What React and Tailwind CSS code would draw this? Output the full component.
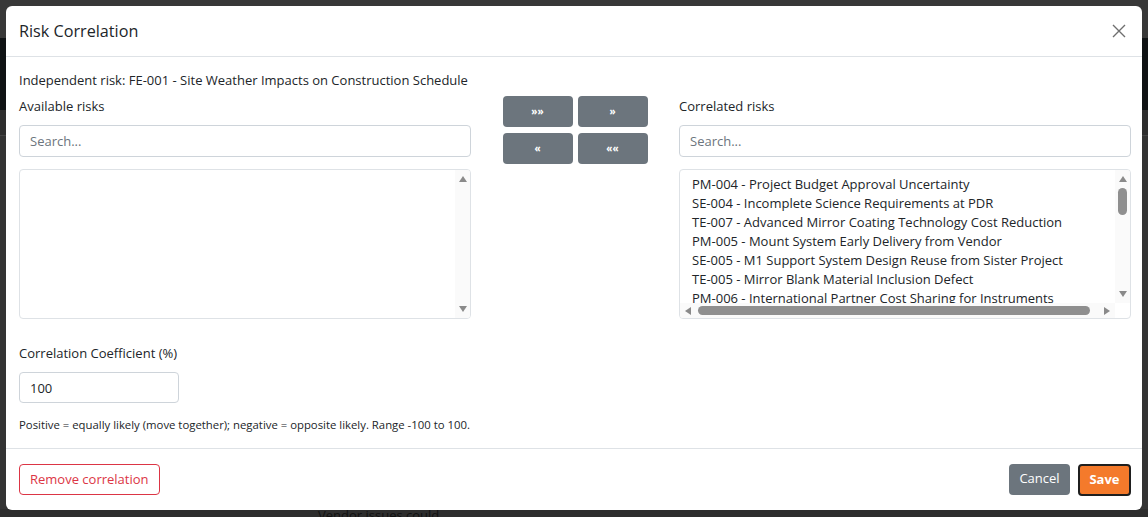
import React, { useState } from 'react';

const correlated = [
  'PM-004 - Project Budget Approval Uncertainty',
  'SE-004 - Incomplete Science Requirements at PDR',
  'TE-007 - Advanced Mirror Coating Technology Cost Reduction',
  'PM-005 - Mount System Early Delivery from Vendor',
  'SE-005 - M1 Support System Design Reuse from Sister Project',
  'TE-005 - Mirror Blank Material Inclusion Defect',
  'PM-006 - International Partner Cost Sharing for Instruments',
  'SE-006 - Enclosure Thermal Model Validation Gap',
];

const Tri = ({ dir }) => {
  const pts = {
    up: '0,6 4,0 8,6',
    down: '0,0 8,0 4,6',
    left: '6,0 6,8 0,4',
    right: '0,0 0,8 6,4',
  }[dir];
  const w = dir === 'up' || dir === 'down' ? 8 : 6;
  const h = dir === 'up' || dir === 'down' ? 6 : 8;
  return (
    <svg width={w} height={h} viewBox={`0 0 ${w} ${h}`}>
      <polygon points={pts} fill="#8a8a8a" />
    </svg>
  );
};

const ListBox = ({ items, horizontal }) => (
  <div className="relative h-[150px] border border-[#dee2e6] rounded-[4px] overflow-hidden bg-white">
    <div className="pl-3 pt-[5px] pr-5 text-[13px] leading-[19px] text-[#212529] whitespace-nowrap">
      {items.map((t) => (
        <div key={t}>{t}</div>
      ))}
    </div>
    {/* vertical scrollbar */}
    <div className={`absolute right-0 top-0 w-[15px] bg-[#fafafa] flex flex-col items-center justify-between py-[6px] ${horizontal ? 'bottom-[15px]' : 'bottom-0'}`}>
      <Tri dir="up" />
      {horizontal && <div className="absolute top-[18px] left-[3px] w-[9px] h-[27px] rounded-full bg-[#8f8f8f]" />}
      <Tri dir="down" />
    </div>
    {horizontal && (
      <div className="absolute left-0 right-[15px] bottom-0 h-[15px] bg-[#fafafa] flex items-center justify-between px-[5px]">
        <Tri dir="left" />
        <div className="flex-1 mx-[7px] h-[9px] rounded-full bg-[#8f8f8f] mr-[14px]" />
        <Tri dir="right" />
      </div>
    )}
  </div>
);

const SearchBox = () => (
  <input
    className="w-full h-[32px] border border-[#ced4da] rounded-[4px] px-[10px] text-[13px] text-[#212529] placeholder-[#6c757d] outline-none"
    placeholder="Search..."
  />
);

const MoveButton = ({ label }) => (
  <button className="w-[70px] h-[31px] rounded-[4px] bg-[#6c757d] text-white text-[10px] font-bold flex items-center justify-center">
    {label}
  </button>
);

export default function App() {
  const [coef, setCoef] = useState('100');

  return (
    <div
      className="relative w-[1148px] h-[517px] overflow-hidden bg-[#363636]"
      style={{ fontFamily: '"Open Sans", "Liberation Sans", sans-serif' }}
    >
      {/* dimmed page behind the dialog */}
      <div className="absolute inset-0 flex flex-col">
        <div className="h-[38px] bg-[#383838]" />
        <div className="h-[72px] bg-[#0f1214]" />
        <div className="h-[26px] bg-[#2e2e2e] border-b border-[#444]" />
        <div className="flex-1 bg-[#333]" />
        <div className="h-[8px] bg-[#2d2d2d] text-[13px] leading-[12px] text-[#111] pl-[318px]">Vendor issues could</div>
      </div>

      {/* dialog */}
      <div className="absolute left-[6px] top-[6px] w-[1136px] h-[504px] bg-white rounded-[6px] flex flex-col text-[#212529]">
        <div className="h-[51px] flex items-center justify-between px-[13px] border-b border-[#dee2e6]">
          <h2 className="text-[16.2px] leading-none">Risk Correlation</h2>
          <svg width="14" height="14" viewBox="0 0 14 14" className="mr-[3px]">
            <path d="M1 1 L13 13 M13 1 L1 13" stroke="#6f6f6f" strokeWidth="1.4" />
          </svg>
        </div>

        <div className="flex-1 pl-[13px] pr-[11px] pt-[14px]">
          <div className="text-[13px] leading-[19px]">
            Independent risk: FE-001 - Site Weather Impacts on Construction Schedule
          </div>

          <div className="flex">
            <div className="w-[452px]">
              <div className="text-[13px] leading-[19px] mb-[9px] mt-[7px]">Available risks</div>
              <SearchBox />
              <div className="mt-[12px]">
                <ListBox items={[]} />
              </div>
            </div>

            <div className="flex-1 flex justify-center pt-[6px]">
              <div className="grid grid-cols-2 gap-x-[5px] gap-y-[6px] h-fit">
                <MoveButton label="»»" />
                <MoveButton label="»" />
                <MoveButton label="«" />
                <MoveButton label="««" />
              </div>
            </div>

            <div className="w-[452px]">
              <div className="text-[13px] leading-[19px] mb-[9px] mt-[7px]">Correlated risks</div>
              <SearchBox />
              <div className="mt-[12px]">
                <ListBox items={correlated} horizontal />
              </div>
            </div>
          </div>

          <div className="text-[13px] leading-[19px] mt-[25px]">Correlation Coefficient (%)</div>
          <input
            value={coef}
            onChange={(e) => setCoef(e.target.value)}
            className="mt-[9px] w-[160px] h-[31px] border border-[#ced4da] rounded-[4px] px-[10px] text-[13px] outline-none"
          />
          <div className="text-[11.35px] leading-[16px] mt-[14px]">
            Positive = equally likely (move together); negative = opposite likely. Range -100 to 100.
          </div>
        </div>

        <div className="h-[62px] border-t border-[#dee2e6] flex items-center justify-between pl-[13px] pr-[11px]">
          <button className="h-[31px] px-[10px] border border-[#dc3545] text-[#dc3545] rounded-[4px] text-[13px]">
            Remove correlation
          </button>
          <div className="flex gap-[8px]">
            <button className="h-[31px] w-[61px] bg-[#6c757d] text-white rounded-[4px] text-[13px]">Cancel</button>
            <button className="h-[32px] w-[53px] bg-[#f47a2b] text-white font-bold rounded-[4px] text-[13px] border-2 border-[#1f1f1f]">
              Save
            </button>
          </div>
        </div>
      </div>
    </div>
  );
}
